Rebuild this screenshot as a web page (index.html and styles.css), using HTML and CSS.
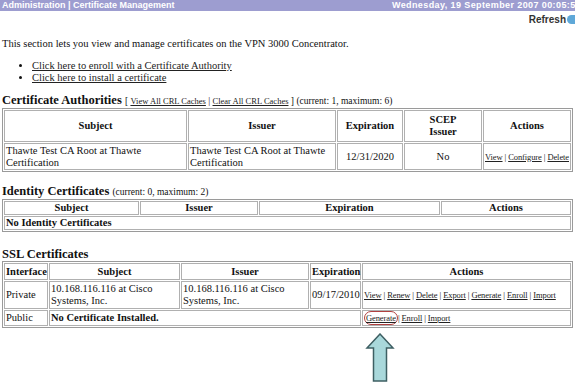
FILE: index.html
```html
<!DOCTYPE html>
<html lang="en">
<head>
  <meta charset="UTF-8">
  <title>Certificate Management</title>
  <link rel="stylesheet" href="styles.css">
</head>
<body>
  <div class="topbar">
    <span class="crumb">Administration | Certificate Management</span>
    <span class="date">Wednesday, 19 September 2007 00:05:53</span>
  </div>
  <div class="refresh-row">
    <a class="refresh" href="#">Refresh<span class="refresh-icon"></span></a>
  </div>

  <div class="content">
    <p class="intro">This section lets you view and manage certificates on the VPN 3000 Concentrator.</p>
    <ul class="links">
      <li><a href="#">Click here to enroll with a Certificate Authority</a></li>
      <li><a href="#">Click here to install a certificate</a></li>
    </ul>

    <h2>Certificate Authorities <span class="note">[ <a href="#">View All CRL Caches</a> | <a href="#">Clear All CRL Caches</a> ] (current: 1, maximum: 6)</span></h2>
    <table class="grid ca">
      <tr class="tall">
        <th class="c-subj">Subject</th>
        <th class="c-iss">Issuer</th>
        <th class="c-exp">Expiration</th>
        <th class="c-scep">SCEP<br>Issuer</th>
        <th>Actions</th>
      </tr>
      <tr>
        <td>Thawte Test CA Root at Thawte Certification</td>
        <td>Thawte Test CA Root at Thawte Certification</td>
        <td class="center">12/31/2020</td>
        <td class="center">No</td>
        <td class="actions"><a href="#">View</a> | <a href="#">Configure</a> | <a href="#">Delete</a></td>
      </tr>
    </table>

    <h2 class="ident-title">Identity Certificates <span class="note">(current: 0, maximum: 2)</span></h2>
    <table class="grid ident">
      <tr>
        <th class="c-subj">Subject</th>
        <th class="c-iss">Issuer</th>
        <th class="c-exp">Expiration</th>
        <th>Actions</th>
      </tr>
      <tr>
        <td colspan="4" class="bold">No Identity Certificates</td>
      </tr>
    </table>

    <h2 class="ssl-title">SSL Certificates</h2>
    <table class="grid ssl">
      <tr>
        <th class="c-if">Interface</th>
        <th class="c-subj">Subject</th>
        <th class="c-iss">Issuer</th>
        <th class="c-exp">Expiration</th>
        <th>Actions</th>
      </tr>
      <tr>
        <td>Private</td>
        <td>10.168.116.116 at Cisco Systems, Inc.</td>
        <td>10.168.116.116 at Cisco Systems, Inc.</td>
        <td>09/17/2010</td>
        <td class="actions"><a href="#">View</a> | <a href="#">Renew</a> | <a href="#">Delete</a> | <a href="#">Export</a> | <a href="#">Generate</a> | <a href="#">Enroll</a> | <a href="#">Import</a></td>
      </tr>
      <tr>
        <td>Public</td>
        <td colspan="3" class="bold">No Certificate Installed.</td>
        <td class="actions"><span class="circled"><a href="#">Generate</a></span>| <a href="#">Enroll</a> | <a href="#">Import</a></td>
      </tr>
    </table>
  </div>

  <svg class="arrow" width="30" height="50" viewBox="0 0 30 50">
    <path d="M15 1 L28 15 L21.5 15 L21.5 48 L8.5 48 L8.5 15 L2 15 Z" fill="#a9d8db" stroke="#3e5f63" stroke-width="1.5" stroke-linejoin="miter"/>
  </svg>
</body>
</html>
```

FILE: styles.css
```css
* {
  margin: 0;
  padding: 0;
  box-sizing: border-box;
}

body {
  font-family: "Liberation Serif", "Times New Roman", serif;
  font-size: 10.5px;
  color: #111;
  background: #fff;
  position: relative;
  width: 575px;
  height: 382px;
  overflow: hidden;
}

a {
  color: #222;
}

.topbar {
  height: 11px;
  background: #9d9dd0;
  color: #fff;
  font-family: "Liberation Sans", Arial, sans-serif;
  font-size: 9px;
  font-weight: bold;
  line-height: 11px;
  display: flex;
  justify-content: space-between;
  white-space: nowrap;
  overflow: hidden;
  padding-left: 2px;
}

.date {
  letter-spacing: 0.4px;
  margin-right: -6px;
}

.refresh-row {
  display: flex;
  justify-content: flex-end;
  height: 13px;
  margin-top: 2px;
}

.refresh {
  font-family: "Liberation Sans", Arial, sans-serif;
  font-size: 10px;
  font-weight: bold;
  color: #333;
  text-decoration: none;
  display: flex;
  align-items: center;
  gap: 1px;
}

.refresh-icon {
  width: 8px;
  height: 9px;
  border-radius: 5px 0 0 5px;
  background: #5fa8d8;
  display: inline-block;
}

.content {
  padding: 0 2px;
}

.intro {
  margin-top: 12px;
  line-height: 12px;
}

.links {
  margin: 10px 0 0 30px;
  list-style: disc;
  line-height: 12px;
}

h2 {
  font-size: 12.5px;
  font-weight: bold;
  line-height: 14px;
  margin-top: 9px;
}

.note {
  font-size: 9.5px;
  font-weight: normal;
}

.note a {
  font-size: 8.5px;
}

.grid {
  width: 571px;
  border: 1px solid #9a9a9a;
  border-collapse: separate;
  border-spacing: 1px;
  table-layout: fixed;
}

.grid th,
.grid td {
  border: 1px solid #b0b0b0;
  padding: 0 1px;
  vertical-align: middle;
  line-height: 12px;
  text-align: left;
}

.grid th {
  text-align: center;
  font-weight: bold;
}

.grid .center {
  text-align: center;
}

.grid .bold {
  font-weight: bold;
}

.actions {
  font-size: 8.5px;
  white-space: nowrap;
  letter-spacing: -0.1px;
}

.ca .tall th {
  height: 32px;
}

.ca td {
  height: 27px;
}

.ca .c-subj { width: 183px; }
.ca .c-iss { width: 148px; }
.ca .c-exp { width: 66px; }
.ca .c-scep { width: 78px; }

.ident-title {
  margin-top: 12px;
}

.ident th,
.ident td {
  height: 13px;
}

.ident .c-subj { width: 135px; }
.ident .c-iss { width: 118px; }
.ident .c-exp { width: 181px; }

.ssl-title {
  margin-top: 15px;
}

.ssl th {
  height: 17px;
}

.ssl td {
  height: 28px;
}

.ssl tr:last-child td {
  height: 16px;
}

.ssl .c-if { width: 44px; }
.ssl .c-subj { width: 131px; }
.ssl .c-iss { width: 128px; }
.ssl .c-exp { width: 51px; }

.circled {
  border: 1px solid #b04040;
  border-radius: 7px;
  padding: 1px 1px;
}

.arrow {
  position: absolute;
  left: 365px;
  top: 333px;
}
```
